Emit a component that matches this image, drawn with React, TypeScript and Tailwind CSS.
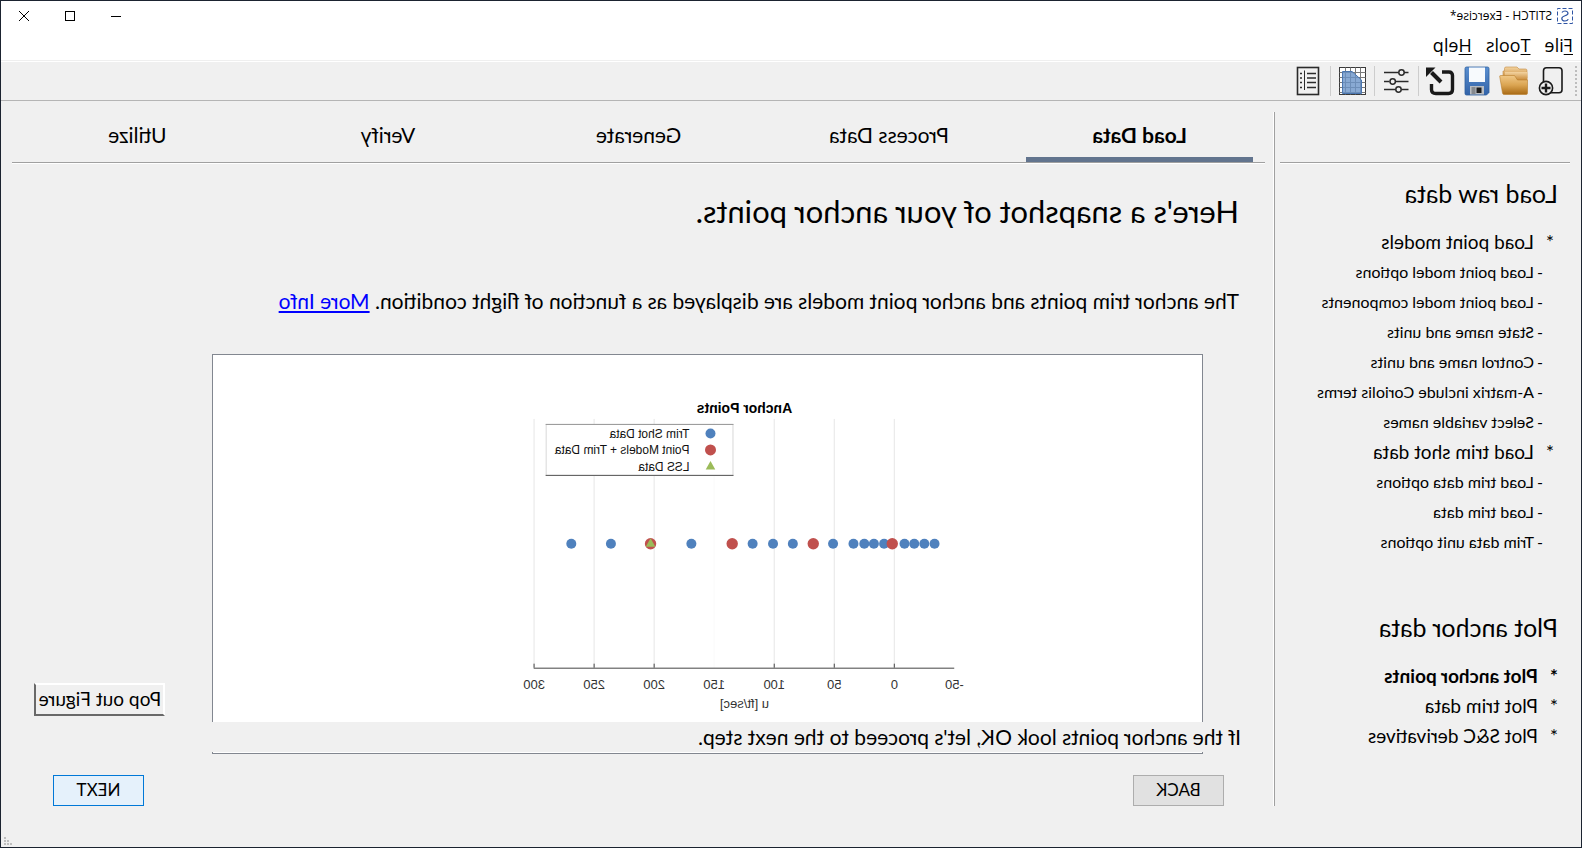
import React, { useState } from 'react'

interface SidebarItem {
  label: string
  sub?: boolean
  active?: boolean
}

const tabs = ['Load Data', 'Process Data', 'Generate', 'Verify', 'Utilize']

const rawDataSteps: SidebarItem[] = [
  { label: 'Load point models' },
  { label: 'Load point model options', sub: true },
  { label: 'Load point model components', sub: true },
  { label: 'State name and units', sub: true },
  { label: 'Control name and units', sub: true },
  { label: 'A-matrix include Coriolis terms', sub: true },
  { label: 'Select variable names', sub: true },
  { label: 'Load trim shot data' },
  { label: 'Load trim data options', sub: true },
  { label: 'Load trim data', sub: true },
  { label: 'Trim data unit options', sub: true },
]

const anchorSteps: SidebarItem[] = [
  { label: 'Plot anchor points', active: true },
  { label: 'Plot trim data' },
  { label: 'Plot S&C derivatives' },
]

// u [ft/sec]
const trimShots = [-33.5, -25, -16.6, -8.5, 8.5, 17, 25, 34, 51, 84.5, 101, 118, 169, 236, 269]
const pointModels = [1.7, 67.5, 135, 203]
const lssPoints = [203]
const ticks = [-50, 0, 50, 100, 150, 200, 250, 300]

const toX = (u: number) => 308 + u * 1.202

const AppIcon = () => (
  <svg width="16" height="16" viewBox="0 0 16 16" fill="none" stroke="#2f55a4">
    <rect x="0.5" y="0.5" width="15" height="15" strokeDasharray="4 2" />
    <path d="M11 4.6C10.4 3.4 9.2 3 8 3 6.3 3 5 3.9 5 5.3 5 8.4 11.2 7.2 11.2 10.5 11.2 12 9.8 13 8 13 6.5 13 5.3 12.4 4.7 11.2" strokeWidth="1.2" />
  </svg>
)

const NewIcon = () => (
  <svg width="26" height="30" viewBox="0 0 26 30" fill="none" stroke="#1a1a1a">
    <rect x="2" y="1.8" width="18.5" height="25" rx="3" strokeWidth="1.6" />
    <circle cx="18" cy="22" r="6.6" fill="#f0f0f0" strokeWidth="1.6" />
    <path d="M18 17.5v9M13.500 22h9" strokeWidth="2.4" />
  </svg>
)

const FolderIcon = () => (
  <svg width="30" height="30" viewBox="0 0 30 30">
    <defs>
      <linearGradient id="folderBack" x1="0" y1="0" x2="0" y2="1">
        <stop offset="0" stopColor="#f3d3a0" />
        <stop offset="1" stopColor="#c98b3a" />
      </linearGradient>
      <linearGradient id="folderFront" x1="0" y1="0" x2="0" y2="1">
        <stop offset="0" stopColor="#f0c888" />
        <stop offset="0.5" stopColor="#dba552" />
        <stop offset="1" stopColor="#a96a14" />
      </linearGradient>
    </defs>
    <path d="M2 4.5Q2 3 3.5 3H10L12 1H23Q24.5 1 24.5 2.5V5H26V12H2z" fill="url(#folderBack)" stroke="#c28a42" strokeWidth="0.6" />
    <path d="M1.5 6H24V14H1.5z" fill="url(#folderBack)" />
    <path d="M1.5 14L11.5 14 14.5 9.5H28.5Q29.6 9.5 29.2 11L26.5 27Q26.3 28.5 24.8 28.5H3Q1.5 28.5 1.5 27z" fill="url(#folderFront)" stroke="#b87d2b" strokeWidth="0.6" />
  </svg>
)

const SaveIcon = () => (
  <svg width="26" height="30" viewBox="0 0 26 30">
    <defs>
      <linearGradient id="disk" x1="0" y1="0" x2="0" y2="1">
        <stop offset="0" stopColor="#5a8fd0" />
        <stop offset="1" stopColor="#3263a8" />
      </linearGradient>
    </defs>
    <path d="M1 2.5Q1 1 2.5 1H23.5Q25 1 25 2.5V27.5Q25 29 23.5 29H3.5L1 26.5z" fill="url(#disk)" stroke="#2f5f9f" strokeWidth="0.8" />
    <rect x="5" y="1.5" width="16" height="14.5" fill="#f7fafd" />
    <rect x="6" y="20" width="14" height="8.5" fill="#b9bdc2" />
    <rect x="8.500" y="21.5" width="5" height="5.500" fill="#1c1c1c" />
    <rect x="14.500" y="21" width="4" height="7" fill="#85898e" />
  </svg>
)

const PopOutIcon = () => (
  <svg width="30" height="30" viewBox="0 0 30 30" fill="none" stroke="#1a1a1a">
    <path d="M13 6H6Q2.5 6 2.5 9.5V23.5Q2.5 27.5 6.5 27.5H19Q23.5 27.5 23.5 23.5V18" strokeWidth="3.4" />
    <path d="M14 16L23.5 6.5" strokeWidth="4" />
    <path d="M19.5 1.5H29V11z" fill="#1a1a1a" stroke="none" />
  </svg>
)

const SlidersIcon = () => (
  <svg width="26" height="30" viewBox="0 0 26 30" fill="none" stroke="#2a2a2a" strokeWidth="1.5">
    <path d="M0.5 6.5H5M10.5 6.5H25M0.5 15.5H13M19.5 15.5H25M0.5 23.5H7.5M13.5 23.5H25" />
    <circle cx="7.5" cy="6.5" r="2.7" />
    <circle cx="16.3" cy="15.5" r="2.7" />
    <circle cx="10.5" cy="23.5" r="2.7" />
  </svg>
)

const RegionIcon = () => (
  <svg width="28" height="30" viewBox="0 0 28 30" fill="none">
    <rect x="0.5" y="1.5" width="26" height="27" fill="#fff" stroke="#3a3a3a" />
    <path d="M5.5 1.5V28.5M10.5 1.5V28.5M15.5 1.5V28.5M20.5 1.5V28.5M0.5 6.5H26.5M0.5 11.5H26.5M0.5 16.5H26.5M0.5 21.5H26.5M0.5 26.5H26.5" stroke="#7a7a7a" />
    <path d="M4.5 27.5V14L14 5.5H23.5V27.5z" fill="#6a93c8" fillOpacity="0.8" stroke="#4a76b0" />
  </svg>
)

const ListIcon = () => (
  <svg width="24" height="30" viewBox="0 0 24 30" fill="none" stroke="#2a2a2a">
    <rect x="1.5" y="1.5" width="21" height="27" strokeWidth="1.6" />
    <path d="M4 7.5H13M4 12H13M4 16.5H13M4 21.5H13" strokeWidth="1.6" />
    <path d="M15.5 4.5V24" strokeWidth="1" />
    <path d="M18 7.5H20M18 12H20M18 16.5H20M18 21.5H20" strokeWidth="1.6" />
  </svg>
)

const ToolButton: React.FC<{ label: string; children: React.ReactNode }> = ({ label, children }) => (
  <button aria-label={label} className="flex h-9 w-[37px] items-center justify-center hover:bg-[#dcebf7]">
    {children}
  </button>
)

const Separator = () => <div className="mx-[3px] h-[30px] w-px bg-[#cdcdcd]" />

const TitleBar = () => (
  <div className="flex h-[29px] items-center justify-between pl-2 font-['Open_Sans','Noto_Sans',sans-serif]">
    <div className="flex items-center gap-[5px]">
      <AppIcon />
      <span className="text-[12px]">STITCH - Exercise*</span>
    </div>
    <div className="flex h-full">
      <button aria-label="Minimize" className="flex w-[46px] items-center justify-center">
        <svg width="10" height="10" viewBox="0 0 10 10" stroke="#000"><path d="M0 5.5H10" /></svg>
      </button>
      <button aria-label="Maximize" className="flex w-[46px] items-center justify-center">
        <svg width="10" height="10" viewBox="0 0 10 10" stroke="#000" fill="none"><rect x="0.5" y="0.5" width="9" height="9" /></svg>
      </button>
      <button aria-label="Close" className="flex w-[46px] items-center justify-center">
        <svg width="10" height="10" viewBox="0 0 10 10" stroke="#000"><path d="M0 0L10 10M10 0L0 10" /></svg>
      </button>
    </div>
  </div>
)

const MenuBar = () => (
  <nav className="flex h-[31px] items-center gap-[14px] border-b border-[#efefef] pl-2 font-['Open_Sans','Noto_Sans',sans-serif] text-[18px]">
    {['File', 'Tools', 'Help'].map((m) => (
      <button key={m}>
        <span className="underline underline-offset-2">{m[0]}</span>{m.slice(1)}
      </button>
    ))}
  </nav>
)

const Toolbar = () => (
  <div className="flex h-10 items-center border-t border-b border-t-white border-b-[#b5b5b5] bg-[#f0f0f0] pl-1">
    <div className="mr-[5px] h-[30px] border-l-2 border-dotted border-[#bdbdbd]" />
    <ToolButton label="New"><NewIcon /></ToolButton>
    <ToolButton label="Open"><FolderIcon /></ToolButton>
    <ToolButton label="Save"><SaveIcon /></ToolButton>
    <ToolButton label="Pop out"><PopOutIcon /></ToolButton>
    <Separator />
    <ToolButton label="Options"><SlidersIcon /></ToolButton>
    <Separator />
    <ToolButton label="Region"><RegionIcon /></ToolButton>
    <Separator />
    <ToolButton label="Report"><ListIcon /></ToolButton>
  </div>
)

const StepList: React.FC<{ items: SidebarItem[]; className: string }> = ({ items, className }) => (
  <ul className={className}>
    {items.map((item) => (
      <li key={item.label} className={`flex h-[30px] items-center ${item.active ? 'font-bold' : ''} ${item.sub ? 'pl-[11px] text-[16px]' : 'text-[19px]'}`}>
        <span className={item.sub ? 'w-[9px]' : 'w-5'}>{item.sub ? '-' : '*'}</span>
        <span>{item.label}</span>
      </li>
    ))}
  </ul>
)

const Sidebar = () => (
  <aside className="w-[290px] shrink-0">
    <div className="h-[52px] border-b border-white">
      <div className="h-[51px] border-b border-[#a0a0a0]" />
    </div>
    <h2 className="mt-[13px] pl-3 text-[25px] leading-8">Load raw data</h2>
    <StepList items={rawDataSteps} className="mt-[18px] pl-4" />
    <h2 className="mt-[54px] pl-3 text-[25px] leading-8">Plot anchor data</h2>
    <StepList items={anchorSteps} className="mt-[18px] pl-3" />
  </aside>
)

const AnchorPlot = () => (
  <svg viewBox="0 0 990 367" className="block w-full font-['Liberation_Sans',Arial,sans-serif]">
    <text x="458" y="58" textAnchor="middle" fontSize="14" fontWeight="bold">Anchor Points</text>
    {ticks.map((t) => (
      <g key={t}>
        {t > -50 && <path d={`M${toX(t)} 64V313`} stroke={t === 150 ? '#fafafa' : '#e6e6e6'} />}
        {t > -50 && t !== 150 && <path d={`M${toX(t)} 309V313`} stroke="#444" />}
        <text x={toX(t)} y="334" textAnchor="middle" fontSize="13" fill="#333">{t}</text>
      </g>
    ))}
    <path d="M248 313.5H669" stroke="#444" />
    <text x="458" y="353" textAnchor="middle" fontSize="13" fill="#333">u [ft/sec]</text>
    {trimShots.map((u) => <circle key={u} cx={toX(u)} cy="189" r="5" fill="#4f81bd" />)}
    {pointModels.map((u) => <circle key={u} cx={toX(u)} cy="189" r="5.7" fill="#c0504d" />)}
    {lssPoints.map((u) => <path key={u} d={`M${toX(u)} 183.5l4.8 8.5h-9.6z`} fill="#9bbb59" />)}
    <rect x="469.5" y="69.5" width="187" height="51" fill="#fff" stroke="#d8d8d8" />
    <path d="M469 69.5H657" stroke="#999" />
    <path d="M469 120.5H657" stroke="#555" />
    <circle cx="492" cy="78.5" r="5" fill="#4f81bd" />
    <circle cx="492" cy="95" r="5.5" fill="#c0504d" />
    <path d="M492 106l4.8 8.5h-9.6z" fill="#9bbb59" />
    <g fontSize="12" fill="#111">
      <text x="513" y="83">Trim Shot Data</text>
      <text x="513" y="99">Point Models + Trim Data</text>
      <text x="513" y="116">LSS Data</text>
    </g>
  </svg>
)

const App: React.FC = () => {
  const [activeTab, setActiveTab] = useState('Load Data')

  return (
    <div className="flex min-h-screen -scale-x-100 flex-col border border-[#1b2330] bg-[#f0f0f0] font-['Lato',sans-serif] text-black">
      <header className="bg-white">
        <TitleBar />
        <MenuBar />
        <Toolbar />
      </header>

      <div className="flex flex-1 px-[11px] pt-[11px]">
        <Sidebar />
        <div className="mx-[5px] w-[2px] border-r border-l border-r-white border-l-[#a0a0a0]" />
        <main className="ml-[3px] min-w-0 flex-1">
          <div className="border-b border-white">
            <div className="flex h-[51px] border-b border-[#a0a0a0]" role="tablist">
              {tabs.map((tab) => (
                <button
                  key={tab}
                  role="tab"
                  aria-selected={tab === activeTab}
                  onClick={() => setActiveTab(tab)}
                  className={`mx-3 flex-1 border-b-[5px] text-[21px] ${tab === activeTab ? 'border-[#62748e] font-bold' : 'border-transparent'}`}
                >
                  {tab}
                </button>
              ))}
            </div>
          </div>

          <h1 className="mt-[27px] pl-[26px] text-[31px] leading-10">Here's a snapshot of your anchor points.</h1>
          <p className="mt-14 pl-[26px] text-[21px] leading-7">
            The anchor trim points and anchor point models are displayed as a function of flight condition. <a href="#info" className="text-[#0000ff] underline">More Info</a>
          </p>

          <div className="mt-[39px] flex">
            <div className="ml-[62px] flex-1 border border-[#828790] bg-white pb-px">
              <AnchorPlot />
              <p className="-mr-px -ml-10 h-[30px] bg-[#f0f0f0] pl-px text-[21px] leading-[30px]">
                If the anchor points look OK, let's proceed to the next step.
              </p>
            </div>
            <div className="flex w-[200px] items-end justify-center pb-[38px] pl-6">
              <button className="h-[33px] w-[131px] border-2 border-t-white border-r-[#696969] border-b-[#696969] border-l-white text-[19px] whitespace-nowrap">
                Pop out Figure
              </button>
            </div>
          </div>

          <div className="mt-[21px] flex justify-between px-[41px]">
            <button className="h-[31px] w-[91px] border border-[#adadad] bg-[#e1e1e1] text-[17px]">BACK</button>
            <button className="h-[31px] w-[91px] border border-[#0078d7] bg-[#e5f1fb] text-[17px]">NEXT</button>
          </div>
        </main>
      </div>

      <footer className="flex h-[41px] items-end justify-end pr-[3px] pb-[2px]">
        <svg width="8" height="8" viewBox="0 0 8 8" fill="#bfbfbf">
          <path d="M6 0h2v2H6zM6 3h2v2H6zM3 3h2v2H3zM6 6h2v2H6zM3 6h2v2H3zM0 6h2v2H0z" />
        </svg>
      </footer>
    </div>
  )
}

export default App
